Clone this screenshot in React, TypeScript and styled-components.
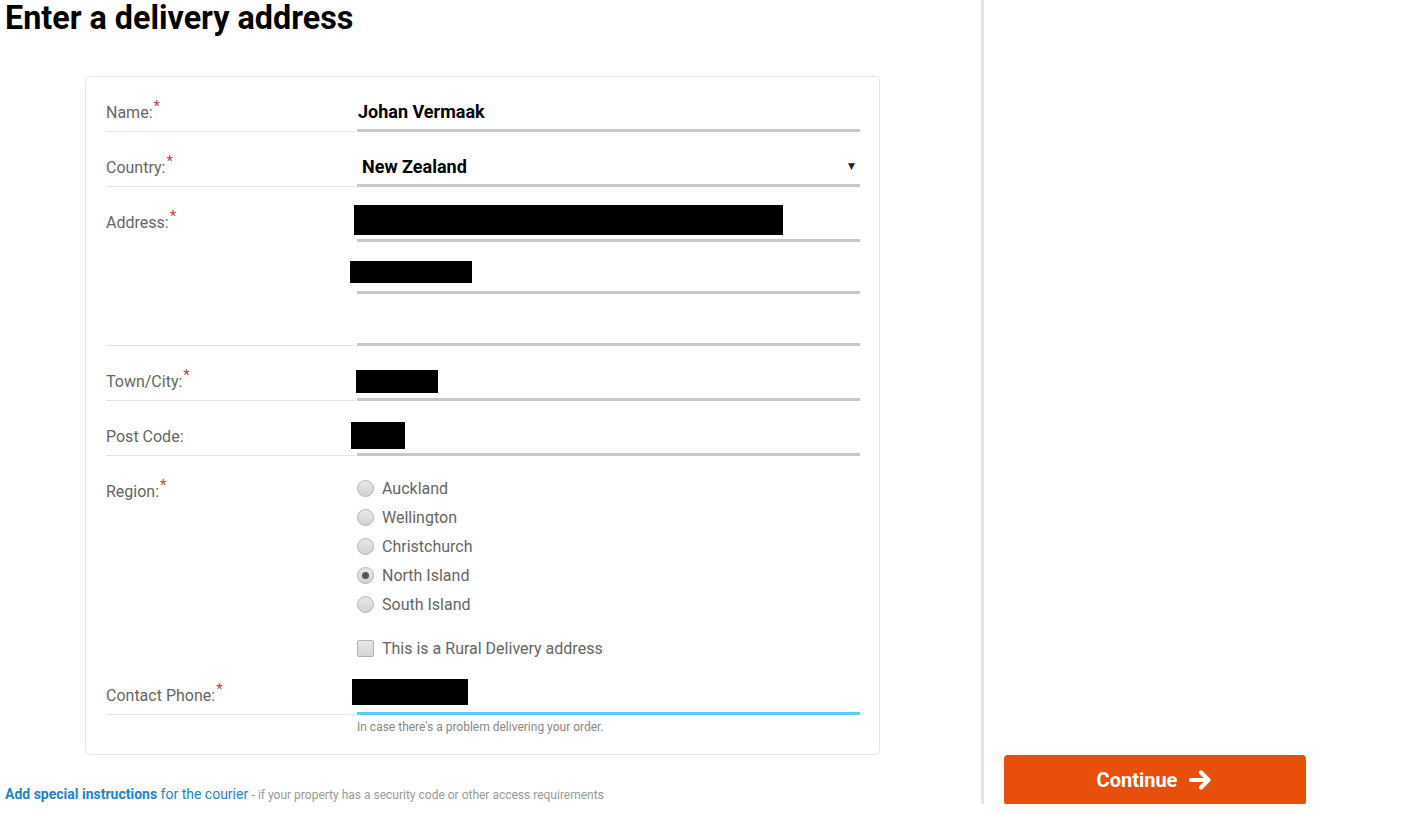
import styled, { createGlobalStyle } from "styled-components";

const GlobalStyle = createGlobalStyle`
	body {
		margin: 0;
		font-family: Roboto, "Liberation Sans", Arial, sans-serif;
		background: #fff;
	}
	* {
		box-sizing: border-box;
	}
`;

const Page = styled.div`
	display: flex;
	width: 1407px;
`;
const Main = styled.main`
	width: 984px;
	padding: 0 0 1px 5px;
	border-right: 3px solid #e6e6e6;
`;
const Side = styled.aside`
	flex: 1;
	display: flex;
	flex-direction: column;
	justify-content: flex-end;
	padding-left: 20px;
	margin-bottom: -1px;
`;
const Title = styled.h1`
	margin: 0;
	font-size: 32.3px;
	line-height: 36px;
	font-weight: 700;
	color: #000;
`;
const Card = styled.div`
	margin: 40px 0 0 80px;
	width: 795px;
	border: 1px solid #e5e5e5;
	border-radius: 5px;
	padding: 0 19px 20px 20px;
`;
const Row = styled.div`
	display: grid;
	grid-template-columns: 249px 503px;
	column-gap: 2px;
`;
const Label = styled.div<{ $line?: boolean }>`
	padding-top: 26px;
	min-height: 55px;
	font-size: 16px;
	line-height: 20px;
	color: #666;
	border-bottom: ${(p) => (p.$line ? "1px solid #e5e5e5" : "none")};
	sup {
		color: #b0474a;
		font-size: 15px;
		line-height: 0;
		vertical-align: 7px;
		margin-left: 1px;
	}
`;
const Fields = styled.div<{ $gap?: number; $top?: number }>`
	align-self: end;
	display: flex;
	flex-direction: column;
	gap: ${(p) => p.$gap ?? 0}px;
	padding-top: ${(p) => p.$top ?? 0}px;
`;
const Field = styled.div<{ $focus?: boolean; $pad?: number }>`
	height: 40px;
	display: flex;
	align-items: center;
	padding: 1px 0 0 ${(p) => p.$pad ?? 1}px;
	border-bottom: 3px solid ${(p) => (p.$focus ? "#5ec8fc" : "#c8c8c8")};
	font-size: 18px;
	font-weight: 700;
	color: #000;
`;
const Caret = styled.span`
	margin-left: auto;
	margin-right: 5px;
	font-size: 9px;
	color: #222;
	font-family: "DejaVu Sans", sans-serif;
`;
const Redacted = styled.span<{ $w: number; $h: number; $top: number; $left: number }>`
	align-self: flex-start;
	display: block;
	width: ${(p) => p.$w}px;
	height: ${(p) => p.$h}px;
	margin-top: ${(p) => p.$top - 1}px;
	margin-left: ${(p) => p.$left}px;
	background: #000;
`;
const Options = styled.div`
	padding-top: 18px;
	display: flex;
	flex-direction: column;
`;
const Option = styled.label`
	display: flex;
	align-items: center;
	height: 29px;
	font-size: 16px;
	color: #666;
	gap: 8px;
`;
const Radio = styled.span<{ $checked?: boolean }>`
	width: 17px;
	height: 17px;
	border-radius: 50%;
	border: 1px solid #b3b3b3;
	background: linear-gradient(#e8e8e8, #d2d2d2);
	display: flex;
	align-items: center;
	justify-content: center;
	&::after {
		content: "";
		width: 7px;
		height: 7px;
		border-radius: 50%;
		background: ${(p) => (p.$checked ? "#555" : "transparent")};
	}
`;
const CheckRow = styled(Option)`
	height: 24px;
	margin-top: 17px;
`;
const Checkbox = styled.span`
	width: 17px;
	height: 17px;
	border-radius: 2px;
	border: 1px solid #b3b3b3;
	background: linear-gradient(#e8e8e8, #d6d6d6);
`;
const Hint = styled.div`
	grid-column: 2;
	padding-top: 5px;
	font-size: 12px;
	line-height: 14px;
	color: #888;
`;
const Note = styled.p`
	margin: 31px 0 0;
	font-size: 14px;
	line-height: 16px;
	color: #1b86cc;
	b {
		font-weight: 700;
	}
	small {
		font-size: 12px;
		color: #999;
	}
`;
const ContinueButton = styled.button`
	width: 302px;
	height: 50px;
	border: none;
	border-radius: 4px;
	background: #e84f0a;
	color: #fff;
	font-family: inherit;
	font-size: 20px;
	font-weight: 700;
	display: flex;
	align-items: center;
	justify-content: center;
	gap: 12px;
	padding: 0;
`;

const Req = () => <sup>*</sup>;

const regions = ["Auckland", "Wellington", "Christchurch", "North Island", "South Island"];

export default function App() {
	return (
		<Page>
			<GlobalStyle />
			<Main>
				<Title>Enter a delivery address</Title>
				<Card>
					<Row>
						<Label $line>
							Name:<Req />
						</Label>
						<Fields>
							<Field>Johan Vermaak</Field>
						</Fields>
					</Row>
					<Row>
						<Label $line>
							Country:<Req />
						</Label>
						<Fields>
							<Field $pad={5}>
								New Zealand
								<Caret>▼</Caret>
							</Field>
						</Fields>
					</Row>
					<Row>
						<Label $line>
							Address:<Req />
						</Label>
						<Fields $gap={12} $top={15}>
							<Field>
								<Redacted $w={429} $h={30} $top={3} $left={-4} />
							</Field>
							<Field>
								<Redacted $w={122} $h={22} $top={7} $left={-8} />
							</Field>
							<Field />
						</Fields>
					</Row>
					<Row>
						<Label $line>
							Town/City:<Req />
						</Label>
						<Fields>
							<Field>
								<Redacted $w={82} $h={23} $top={9} $left={-2} />
							</Field>
						</Fields>
					</Row>
					<Row>
						<Label $line>Post Code:</Label>
						<Fields>
							<Field>
								<Redacted $w={54} $h={27} $top={6} $left={-7} />
							</Field>
						</Fields>
					</Row>
					<Row>
						<Label>
							Region:<Req />
						</Label>
						<Options>
							{regions.map((r) => (
								<Option key={r}>
									<Radio $checked={r === "North Island"} />
									{r}
								</Option>
							))}
							<CheckRow>
								<Checkbox />
								This is a Rural Delivery address
							</CheckRow>
						</Options>
					</Row>
					<Row>
						<Label $line>
							Contact Phone:<Req />
						</Label>
						<Fields>
							<Field $focus>
								<Redacted $w={116} $h={26} $top={4} $left={-6} />
							</Field>
						</Fields>
						<Hint>In case there's a problem delivering your order.</Hint>
					</Row>
				</Card>
				<Note>
					<b>Add special instructions</b> for the courier{" "}
					<small>- if your property has a security code or other access requirements</small>
				</Note>
			</Main>
			<Side>
				<ContinueButton>
					Continue
					<svg width="24" height="22" viewBox="0 0 24 22" fill="none">
						<path
							d="M2 11h17M12 3.5l7.5 7.5-7.5 7.5"
							stroke="#fff"
							strokeWidth="4.2"
							strokeLinecap="round"
							strokeLinejoin="round"
						/>
					</svg>
				</ContinueButton>
			</Side>
		</Page>
	);
}
